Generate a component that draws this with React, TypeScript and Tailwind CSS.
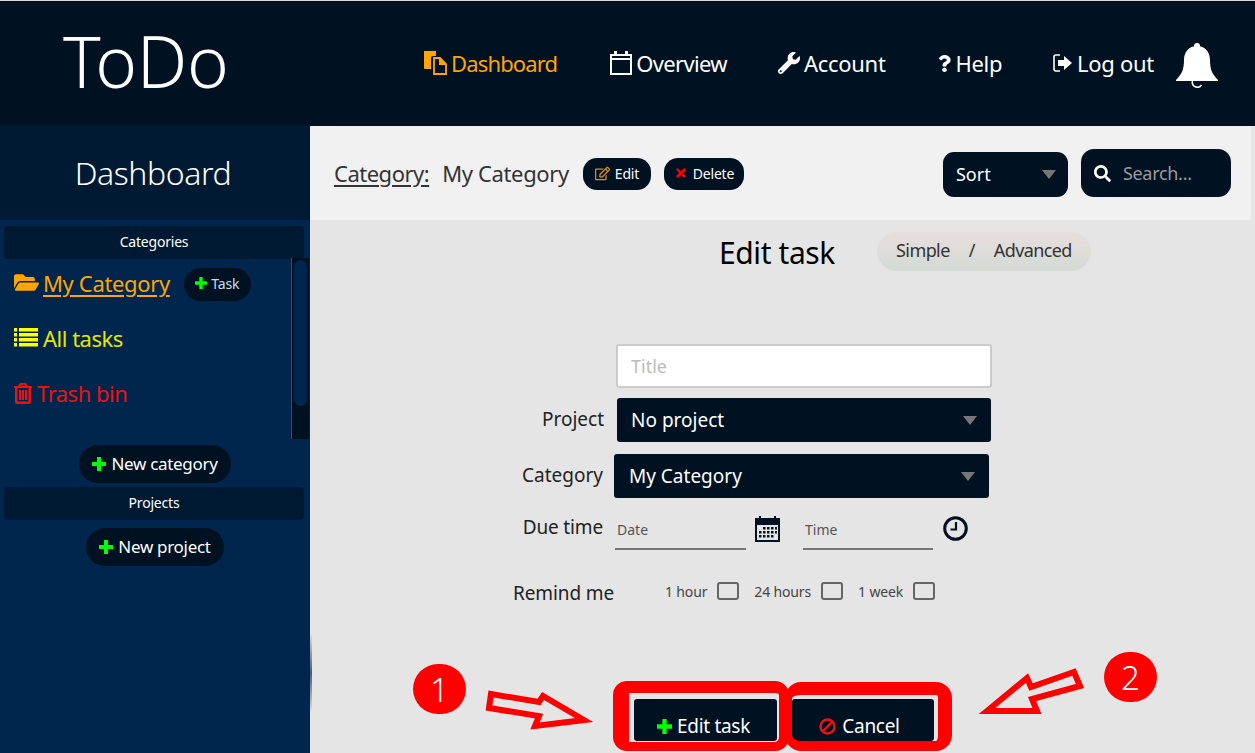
import { FaFolderOpen, FaQuestion, FaRegEdit, FaSearch, FaTimes, FaWrench } from "react-icons/fa";

function DuplicateIcon() {
  return (
    <svg width="23" height="24" viewBox="0 0 23 24" className="text-[#ffa500]" fill="currentColor">
      <path d="M0 0h12v5H9a2 2 0 0 0-2 2v11H1a1 1 0 0 1-1-1z" />
      <path d="M10 7h6l6 6v10H10z" fill="none" stroke="currentColor" strokeWidth="1.8" />
      <path d="M15 7h1l6 6v1h-7z" />
    </svg>
  );
}

function CalendarOutline() {
  return (
    <svg width="22" height="24" viewBox="0 0 22 24" fill="none" stroke="white">
      <rect x="1" y="4" width="20" height="19" strokeWidth="2" />
      <path d="M1 8h20" strokeWidth="2" />
      <path d="M5.500 0v5M16.500 0v5" strokeWidth="3" />
    </svg>
  );
}

function LogoutIcon() {
  return (
    <svg width="20" height="18" viewBox="0 0 20 18" fill="white">
      <path d="M7 1H3a2 2 0 0 0-2 2v12a2 2 0 0 0 2 2h4" fill="none" stroke="white" strokeWidth="1.600" />
      <path d="M5 6h6V2l8 7-8 7v-4H5z" />
    </svg>
  );
}

function BellIcon() {
  return (
    <svg width="42" height="45" viewBox="0 0 42 45" fill="white" className="ml-[22px] shrink-0 mt-[3px]">
      <circle cx="21" cy="3" r="3" />
      <path d="M21 3c-8 0-13 6-13 14 0 9-2 14-8 20v1h42v-1c-6-6-8-11-8-20 0-8-5-14-13-14z" />
      <path d="M16.500 38a5 5 0 0 0 9 4" fill="none" stroke="white" strokeWidth="1.500" />
    </svg>
  );
}

function PlusIcon({ size }: { size: number }) {
  return (
    <svg width={size} height={size} viewBox="0 0 14 14" fill="#00ff00" className="shrink-0">
      <path d="M5 0h4v5h5v4H9v5H5V9H0V5h5z" />
    </svg>
  );
}

function ListIcon() {
  return (
    <svg width="24" height="19" viewBox="0 0 24 19" fill="currentColor" className="shrink-0 -mt-[3px]">
      <path d="M0 0h3v3.500H0zM5 0h19v3.500H5zM0 5h3v3.500H0zM5 5h19v3.500H5zM0 10h3v3.500H0zM5 10h19v3.500H5zM0 15h3v3.500H0zM5 15h19v3.500H5z" />
    </svg>
  );
}

function TrashIcon() {
  return (
    <svg width="18" height="21" viewBox="0 0 18 21" fill="currentColor" className="shrink-0 -mt-[1px]">
      <path fillRule="evenodd" d="M6 0h6l2 3h4v2h-1v14a2 2 0 0 1-2 2H3a2 2 0 0 1-2-2V5H0V3h4zM6.500 3h5l-1-1.300h-3zM3.500 5v13.500h11V5z" />
      <path d="M5 7h2v10H5zM8 7h2v10H8zM11 7h2v10h-2z" />
    </svg>
  );
}

function CalendarGrid() {
  return (
    <svg width="25" height="26" viewBox="0 0 25 26" className="text-[#001122]" fill="currentColor">
      <path fillRule="evenodd" d="M0 2h4V0h2v2h13V0h2v2h4v24H0zM2 9v15h21V9z" />
      <path d="M8 11h2.500v2.500H8zM12 11h2.500v2.500H12zM16 11h2.500v2.500H16zM20 11h2v2.500h-2zM4 15h2.500v2.500H4zM8 15h2.500v2.500H8zM12 15h2.500v2.500H12zM16 15h2.500v2.500H16zM20 15h2v2.500h-2zM4 19h2.500v2.500H4zM8 19h2.500v2.500H8zM12 19h2.500v2.500H12zM16 19h2.500v2.500H16z" />
    </svg>
  );
}

function ClockIcon() {
  return (
    <svg width="25" height="25" viewBox="0 0 25 25" fill="none" stroke="#001122">
      <circle cx="12.500" cy="12.500" r="10.800" strokeWidth="3" />
      <path d="M13 6v7.500H7.500" strokeWidth="2.200" />
    </svg>
  );
}

function Caret() {
  return <span className="w-0 h-0 border-x-[7px] border-x-transparent border-t-[9px] border-t-[#777]" />;
}

function NavItem({ icon, label, className }: { icon: React.ReactNode; label: string; className: string }) {
  return (
    <a className={`flex items-center gap-[4px] text-[22px] leading-none ${className}`}>
      {icon}
      <span>{label}</span>
    </a>
  );
}

function SectionBar({ label }: { label: string }) {
  return (
    <div className="mx-[4px] w-[300px] h-[33px] rounded-[4px] bg-[#001933] flex items-center justify-center text-[14px] text-white tracking-[-0.2px] pb-[2px]">
      {label}
    </div>
  );
}

function PillButton({ label }: { label: string }) {
  return (
    <button className="h-[38px] px-[13px] rounded-full bg-[#001122] flex items-center gap-[5px] text-white text-[17px] tracking-[-0.3px]">
      <PlusIcon size={14} />
      {label}
    </button>
  );
}

function Reminder({ label, className }: { label: string; className: string }) {
  return (
    <label className={`flex items-center gap-[10px] text-[14px] text-[#444] tracking-[-0.15px] ${className}`}>
      {label}
      <span className="w-[22px] h-[18px] rounded-[3px] border-[2px] border-[#666]" />
    </label>
  );
}

export default function App() {
  return (
    <div className="relative w-[1255px] h-[753px] overflow-hidden bg-[#e5e5e5] font-['Noto_Sans',sans-serif]">
      <header className="h-[126px] bg-[#001122] border-t border-[#d8d8d8] flex items-center pl-[63px]">
        <h1 className="w-[361px] text-[71px] font-light text-white leading-none tracking-[-0.4px] -mt-[7px]">ToDo</h1>
        <nav className="flex items-center gap-[51px] -mt-[1px]">
          <NavItem className="text-[#ffa500] tracking-[-0.85px] mr-[2px]" icon={<DuplicateIcon />} label="Dashboard" />
          <NavItem className="text-white tracking-[-0.65px]" icon={<CalendarOutline />} label="Overview" />
          <NavItem className="text-white tracking-[-0.3px]" icon={<FaWrench className="text-[22px]" />} label="Account" />
          <NavItem className="text-white tracking-[-0.35px]" icon={<FaQuestion className="text-[17px] -mx-[1px]" />} label="Help" />
          <NavItem className="text-white tracking-[-0.3px]" icon={<LogoutIcon />} label="Log out" />
        </nav>
        <BellIcon />
      </header>

      <div className="flex h-[627px]">
        <aside className="w-[310px] shrink-0 bg-[#00264d]">
          <div className="h-[94px] bg-[#001a33] flex items-center justify-center pr-[4px] text-[32px] font-light text-white tracking-[-0.4px]">
            Dashboard
          </div>
          <div className="mt-[6px]">
            <SectionBar label="Categories" />
          </div>
          <div className="flex h-[181px] -mt-px">
            <ul className="flex-1 pl-[14px]">
              <li className="h-[55px] flex items-center gap-[4px] pb-[4px] text-[22px] text-[#ffa500] tracking-[-0.35px]">
                <FaFolderOpen className="text-[25px] -mt-[3px]" />
                <span className="underline underline-offset-[3px]">My Category</span>
                <button className="ml-[10px] mt-[1px] pb-[2px] h-[33px] w-[67px] rounded-full bg-[#001122] flex items-center justify-center gap-[4px] text-[14px] text-[#cde] tracking-[-0.2px]">
                  <PlusIcon size={12} />
                  Task
                </button>
              </li>
              <li className="h-[55px] flex items-center gap-[5px] pb-[4px] text-[22px] text-[#e6e600] tracking-[-0.5px]">
                <span className="text-[#ffff00] flex"><ListIcon /></span>
                All tasks
              </li>
              <li className="h-[55px] flex items-center gap-[5px] pb-[4px] text-[22px] text-[#ee1111] tracking-[-0.5px]">
                <TrashIcon />
                Trash bin
              </li>
            </ul>
            <div className="w-[18px] bg-[#001122] border-l border-[#3a4a5a] p-[2px] mr-px">
              <div className="h-[146px] rounded-full bg-[#00264d]" />
            </div>
          </div>
          <div className="flex flex-col items-center mt-[6px]">
            <PillButton label="New category" />
          </div>
          <div className="mt-[4px]">
            <SectionBar label="Projects" />
          </div>
          <div className="flex flex-col items-center mt-[8px]">
            <PillButton label="New project" />
          </div>
        </aside>

        <main className="flex-1">
          <div className="w-[941px] h-[94px] bg-[#f1f1f1] flex items-center pl-[24px]">
            <span className="text-[22px] text-[#333] underline underline-offset-[3px] tracking-[-0.5px]">Category:</span>
            <span className="ml-[13px] text-[22px] text-[#333] tracking-[-0.35px]">My Category</span>
            <button className="ml-[14px] mt-[2px] pb-[2px] h-[32px] w-[68px] rounded-[14px] bg-[#001122] flex items-center justify-center gap-[5px] text-[14px] text-white tracking-[-0.2px]">
              <FaRegEdit className="text-[#e09010] text-[15px]" />
              Edit
            </button>
            <button className="ml-[13px] mt-[2px] pb-[2px] h-[32px] w-[80px] rounded-[14px] bg-[#001122] flex items-center justify-center gap-[5px] text-[14px] text-white tracking-[-0.2px]">
              <FaTimes className="text-[#ff0000] text-[14px]" />
              Delete
            </button>
            <div className="ml-[199px] mt-[2px] w-[125px] h-[45px] rounded-[11px] bg-[#001122] flex items-center justify-between pl-[13px] pr-[12px] text-[18px] text-white">
              Sort
              <Caret />
            </div>
            <div className="ml-[13px] w-[150px] h-[48px] rounded-[13px] bg-[#001122] flex items-center pl-[13px] gap-[12px]">
              <FaSearch className="text-white text-[17px] shrink-0" />
              <span className="text-[18px] text-[#9a9a9a] tracking-[-0.3px]">Search...</span>
            </div>
          </div>

          <div className="flex items-center ml-[409px] mt-[12px]">
            <h2 className="text-[30px] text-black leading-none tracking-[-0.4px] mt-[3px]">Edit task</h2>
            <div className="ml-[42px] w-[214px] h-[39px] rounded-full bg-gradient-to-b from-[#e8dede] to-[#d3dbd3] flex items-center justify-center gap-[19px] pb-[2px] text-[18px] text-[#333] tracking-[-0.6px]">
              <span>Simple</span>
              <span>/</span>
              <span>Advanced</span>
            </div>
          </div>

          <div className="mt-[73px] ml-[306px] w-[376px] h-[44px]">
            <input placeholder="Title" className="w-full h-full rounded-[3px] border-2 border-[#ccc] bg-white px-[13px] text-[18px] placeholder:text-[#bbb]" />
          </div>
          <div className="mt-[10px] ml-[232px] flex items-center">
            <span className="w-[61px] text-right text-[19px] text-[#222] -mt-[1px]">Project</span>
            <div className="ml-[14px] w-[374px] h-[44px] rounded-[3px] bg-[#001122] flex items-center justify-between pl-[14px] pr-[14px] text-[19px] text-white">
              No project
              <Caret />
            </div>
          </div>
          <div className="mt-[12px] ml-[212px] flex items-center">
            <span className="w-[80px] text-right text-[19px] text-[#222] -mt-[1px]">Category</span>
            <div className="ml-[12px] w-[375px] h-[44px] rounded-[3px] bg-[#001122] flex items-center justify-between pl-[15px] pr-[14px] text-[19px] text-white">
              My Category
              <Caret />
            </div>
          </div>

          <div className="mt-[13px] ml-[212px] flex items-start h-[45px]">
            <span className="w-[81px] text-right whitespace-nowrap text-[19px] text-[#222] mt-[2px] tracking-[-0.15px]">Due time</span>
            <input placeholder="Date" className="ml-[12px] mt-[4px] w-[131px] h-[35px] border-b-2 border-[#777] px-[2px] pb-[4px] text-[14px] placeholder:text-[#555]" />
            <span className="ml-[9px] mt-[5px]"><CalendarGrid /></span>
            <input placeholder="Time" className="ml-[23px] mt-[4px] w-[130px] h-[35px] border-b-2 border-[#777] px-[2px] pb-[4px] text-[14px] placeholder:text-[#555]" />
            <span className="ml-[10px] mt-[5px]"><ClockIcon /></span>
          </div>

          <div className="mt-[19px] ml-[203px] flex items-center">
            <span className="w-[152px] text-[19px] text-[#222] mt-[4px] tracking-[-0.1px]">Remind me</span>
            <Reminder label="1 hour" className="" />
            <Reminder label="24 hours" className="ml-[15px]" />
            <Reminder label="1 week" className="ml-[15px]" />
          </div>
        </main>
      </div>

      {/* bottom buttons and the red annotations sit on top of the page */}
      <button className="absolute left-[634px] top-[699px] w-[143px] h-[42px] rounded-[3px] bg-[#001122] pt-[12px] pr-[4px] flex items-center justify-center gap-[5px] text-[19px] text-white tracking-[-0.3px]">
        <PlusIcon size={15} />
        Edit task
      </button>
      <button className="absolute left-[792px] top-[699px] w-[142px] h-[42px] rounded-[3px] bg-[#001122] pt-[12px] pr-[7px] flex items-center justify-center gap-[6px] text-[19px] text-white tracking-[-0.3px]">
        <svg width="17" height="17" viewBox="0 0 17 17" fill="none" stroke="#ee1111" strokeWidth="2.400">
          <circle cx="8.500" cy="8.500" r="7" />
          <path d="M3.500 13.500l10-10" />
        </svg>
        Cancel
      </button>
      <div className="absolute left-[613px] top-[681px] w-[176px] h-[70px] rounded-[14px] border-x-[10px] border-y-[9px] border-[#ff0000] border-l-[16px] border-t-[12px]" />
      <div className="absolute left-[785px] top-[682px] w-[167px] h-[69px] rounded-[16px] border-[10px] border-t-[13px] border-l-[7px] border-r-[14px] border-[#ff0000]" />
      <svg className="absolute left-0 top-0" width="1255" height="753" fill="none" stroke="#ff0000" strokeWidth="6">
        <path d="M491 694l48 8 4-6 41 24-49 6 4-10-50-8z" />
        <path d="M987 711l40-33 4 9 43-15 6 14-48 13 5 12z" />
      </svg>
      <div className="absolute left-[413px] top-[664px] w-[53px] h-[50px] rounded-full bg-[#ff0000] flex items-center justify-center text-[33px] text-white font-light leading-none">1</div>
      <div className="absolute left-[1104px] top-[652px] w-[53px] h-[50px] rounded-full bg-[#ff0000] flex items-center justify-center text-[33px] text-white font-light leading-none">2</div>
      <div className="absolute left-[310px] top-[633px] w-[2px] h-[80px] bg-gradient-to-b from-[#e5e5e5] via-[#4a5f78] to-[#e5e5e5]" />
    </div>
  );
}
